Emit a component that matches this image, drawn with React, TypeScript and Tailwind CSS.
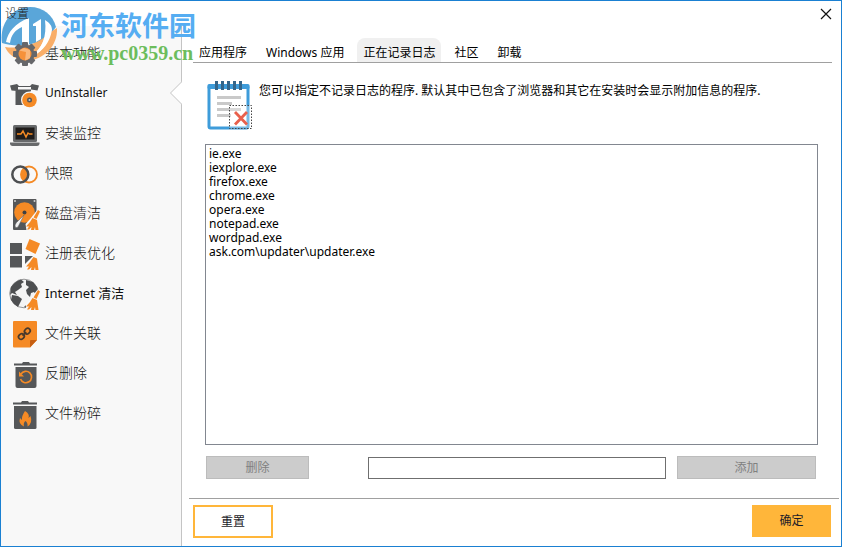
import React from 'react'

const Broom = () => (
  <g>
    <path d="M28.5 16.5L31.5 18.5L29 25.5L31 37.5L17.5 37.5L16.5 31L22 25Z" fill="#f8f8f8" />
    <path d="M29 17L31 18.5L27.5 26L24.5 24.5Z" fill="#f58a25" />
    <path d="M23.5 25L28 27L29.5 37H26.5L26 34L25 37H22L22.5 34L20 36.5H18L20 33.5L17 33.5L21 29Z" fill="#f58a25" />
  </g>
)

const GearIcon = () => (
  <svg className="relative z-20 h-10 w-8 shrink-0" viewBox="0 0 32 40" aria-hidden="true">
    <g fill="#66676a">
      <circle cx="16" cy="21" r="9.5" />
      <rect x="13" y="9" width="6" height="24" rx="1" />
      <rect x="13" y="9" width="6" height="24" rx="1" transform="rotate(45 16 21)" />
      <rect x="13" y="9" width="6" height="24" rx="1" transform="rotate(90 16 21)" />
      <rect x="13" y="9" width="6" height="24" rx="1" transform="rotate(135 16 21)" />
    </g>
    <circle cx="16" cy="21" r="6.5" fill="#f6913a" />
    <path d="M10 17.5L15 15L21 17V25L16 27.500L17 19Z" fill="#f9b77c" />
  </svg>
)

const UninstallerIcon = () => (
  <svg className="h-10 w-8 shrink-0" viewBox="0 0 32 40" aria-hidden="true">
    <path d="M1 12.5L8 11L10 13H21L23 11L30 12.5L28.5 17.5L22 16.5V18H8.5L2.5 17.5Z" fill="#555759" />
    <rect x="9" y="14" width="13" height="2.5" fill="#f8f8f8" />
    <rect x="6.5" y="17.5" width="15" height="14.5" fill="#555759" />
    <circle cx="20.5" cy="27" r="8.5" fill="#f8f8f8" />
    <circle cx="20.5" cy="27" r="7.3" fill="#f58a25" />
    <circle cx="20.5" cy="27" r="2.5" fill="#555759" />
    <circle cx="20.5" cy="27" r="1" fill="#c9c9c9" />
  </svg>
)

const MonitorIcon = () => (
  <svg className="h-10 w-8 shrink-0" viewBox="0 0 32 40" aria-hidden="true">
    <rect x="4" y="12" width="24" height="17" rx="1.5" fill="#67696b" />
    <rect x="6.500" y="14.500" width="19" height="12" fill="#1f1c1b" />
    <path d="M8 21H12L14 18L17 24L19 20L20.500 21H23.500" fill="none" stroke="#f58a25" strokeWidth="1.5" />
    <path d="M1 29.500H30.500V31Q30 33 28 33H3.500Q1.500 33 1 31Z" fill="#67696b" />
  </svg>
)

const SnapshotIcon = () => (
  <svg className="h-10 w-8 shrink-0" viewBox="0 0 32 40" aria-hidden="true">
    <circle cx="20" cy="21.5" r="8" fill="none" stroke="#f58a25" strokeWidth="1.8" />
    <path d="M15.7 14.5C21 17 21 26 15.7 28.500C10.500 26 10.500 17 15.700 14.500Z" fill="#f58a25" />
    <circle cx="11.300" cy="21.500" r="8" fill="none" stroke="#4d4f51" strokeWidth="2.5" />
  </svg>
)

const DiskIcon = () => (
  <svg className="h-10 w-8 shrink-0" viewBox="0 0 32 40" aria-hidden="true">
    <rect x="4" y="6" width="23.5" height="31" rx="1" fill="#555759" />
    <g fill="#d0d0d0">
      <circle cx="6" cy="8" r="1" />
      <circle cx="25.5" cy="8" r="1" />
    </g>
    <circle cx="15.5" cy="19.5" r="10.3" fill="#f58a25" />
    <circle cx="15.5" cy="19.5" r="2" fill="#3f4143" />
    <path d="M15 22L9 34Q6.5 36 6 33Q6 31 7.5 29.5Z" fill="#f1f1f1" stroke="#555759" strokeWidth="0.5" />
    <Broom />
  </svg>
)

const RegistryIcon = () => (
  <svg className="h-10 w-8 shrink-0" viewBox="0 0 32 40" aria-hidden="true">
    <g fill="#555759">
      <rect x="1" y="10" width="12" height="11" />
      <rect x="1" y="23" width="12" height="11.5" />
      <path d="M16 23H24L16 31Z" />
    </g>
    <path d="M20.5 6L31 10.5L26.5 21L16.5 16Z" fill="#f58a25" />
    <path d="M24.500 24L28 25.500L29.500 37H26.500L26 34L25 37H22L22.500 34L20 36.500H18L20 33.500H17L21 29Z" fill="#f58a25" />
  </svg>
)

const GlobeIcon = () => (
  <svg className="h-10 w-8 shrink-0" viewBox="0 0 32 40" aria-hidden="true">
    <circle cx="15" cy="20.5" r="14.3" fill="#f4f4f4" stroke="#555759" strokeWidth="0.6" />
    <g fill="#4d4f51">
      <path d="M2 14Q6 8 12 6.500L15 9L12 11L13 14L9 17L6 19L8 22L3 20L1 22Z" />
      <path d="M3 22L9 23L13 26L11 30L9 34Q4 31 2 27Z" />
      <path d="M17 7L24 9L28 14L29.5 20L27 22L25 19L22 20L21 24L18 21L17 17L20 14L17 12Z" />
      <path d="M15 34L20 29L19 35Z" />
    </g>
    <Broom />
  </svg>
)

const LinkIcon = () => (
  <svg className="h-10 w-8 shrink-0" viewBox="0 0 32 40" aria-hidden="true">
    <path d="M5 8H27Q28 8 28 9V27L21 34.5H5Q4 34.5 4 33.5V9Q4 8 5 8Z" fill="#f58a25" />
    <path d="M28 27H22Q21 27 21 28V34.5Z" fill="#c65f12" />
    <g fill="none" stroke="#4a3a2c" strokeWidth="1.7" transform="rotate(-42 15.5 21)">
      <rect x="8.5" y="18.3" width="6" height="5" rx="2.5" />
      <rect x="16.5" y="18.3" width="6" height="5" rx="2.5" />
      <path d="M13 20.8H18" />
    </g>
  </svg>
)

const UndeleteIcon = () => (
  <svg className="h-10 w-8 shrink-0" viewBox="0 0 32 40" aria-hidden="true">
    <path d="M5 12.5V10.5H13L14 9H20L21 10.5H28V12.5Z" fill="#555759" />
    <path d="M6.5 14H27.5V33Q27.5 35 25.5 35H8.5Q6.5 35 6.5 33Z" fill="#555759" />
    <path d="M12 21A5.7 5.7 0 1 1 11.5 26" fill="none" stroke="#f58a25" strokeWidth="1.6" />
    <path d="M10 18.5V23.5H15Z" fill="#f58a25" />
  </svg>
)

const ShredIcon = () => (
  <svg className="h-10 w-8 shrink-0" viewBox="0 0 32 40" aria-hidden="true">
    <path d="M4 11.5V9.5H12L13 8H19L20 9.5H28V11.5Z" fill="#555759" />
    <path d="M5 13H27.5V34.5Q27.5 36 26 36H6.5Q5 36 5 34.5Z" fill="#555759" />
    <path d="M16 18Q21 21 19.5 25L21.5 23Q24 30 18.5 33.5Q19 30 16.5 28Q14 30 15 33.5Q9 31 11 25L13 27Q12.5 23 16 18Z" fill="#f58a25" />
  </svg>
)

const NotepadIcon = () => (
  <svg className="h-[52px] w-12 shrink-0" viewBox="0 0 48 52" aria-hidden="true">
    <rect x="2" y="6" width="39" height="42" rx="1.5" fill="#fff" stroke="#3e9cda" strokeWidth="3" />
    <rect x="0.500" y="4" width="42" height="5" rx="1.500" fill="#3e9cda" />
    <path d="M9.5 1V10M15.5 1V10M21.5 1V10M27.5 1V10M33.5 1V10" stroke="#33658a" strokeWidth="3" />
    <path d="M10 17.500H34M10 23.500H25M10 29.500H34M10 35.500H24" stroke="#c9c9c9" strokeWidth="3" />
    <rect x="22.500" y="25.500" width="22" height="23" fill="#fff" fillOpacity="0.3" stroke="#444" strokeDasharray="1.5 1.5" />
    <path d="M28 32L40 44.500M40 32L28 44.500" stroke="#e8604c" strokeWidth="2.8" />
  </svg>
)

const menu = [
  { label: '基本功能', Icon: GearIcon },
  { label: 'UnInstaller', Icon: UninstallerIcon, active: true },
  { label: '安装监控', Icon: MonitorIcon },
  { label: '快照', Icon: SnapshotIcon },
  { label: '磁盘清洁', Icon: DiskIcon },
  { label: '注册表优化', Icon: RegistryIcon },
  { label: 'Internet 清洁', Icon: GlobeIcon, latin: true },
  { label: '文件关联', Icon: LinkIcon },
  { label: '反删除', Icon: UndeleteIcon },
  { label: '文件粉碎', Icon: ShredIcon },
]

const tabs = ['应用程序', 'Windows 应用', '正在记录日志', '社区', '卸载']

const programs = [
  'ie.exe',
  'iexplore.exe',
  'firefox.exe',
  'chrome.exe',
  'opera.exe',
  'notepad.exe',
  'wordpad.exe',
  'ask.com\\updater\\updater.exe',
]

const Watermark = () => (
  <div className="pointer-events-none absolute left-0 top-1 z-10 flex items-start gap-1">
    <svg className="h-[60px] w-14" viewBox="0 0 56 60" aria-hidden="true">
      <path d="M1 38C-2 18 12 2 29 2C42 2 52 10 55 22C47 33 40 37 30 39C20 41 10 41 1 38Z" fill="#5aa6d9" />
      <path d="M56 23C57 42 42 56 20 57C36 52 46 42 48 28Z" fill="#f9ae68" />
      <path d="M4 42C16 44 32 41 44 32C40 45 30 53 18 54C11 52 7 48 4 42Z" fill="#f9ae68" />
      <path d="M5 37C7 27 14 18 28 13V39L21 40V22C14 25 10 30 9 38Z" fill="#fff" />
      <path d="M32 19L40 14V34L35 37V21H32Z" fill="#fff" />
      <path d="M44 15C49 18 51 21 51 25C49 37 42 46 32 51C41 42 46 32 44 15Z" fill="#fff" />
    </svg>
    <div className="flex flex-col pt-1">
      <span className="text-[27px] font-bold leading-[34px] text-[#55adf2]">河东软件园</span>
      <span className="font-['Liberation_Serif',serif] text-[20px] font-bold leading-5 text-[#6cbd5c]">www.pc0359.cn</span>
    </div>
  </div>
)

const Sidebar = () => (
  <nav className="w-[181px] shrink-0 border-r border-[#c4c4c4] bg-[#f8f8f8] pt-[7px]">
    {menu.map(({ label, Icon, active, latin }) => (
      <a key={label} href="#" className="relative flex h-10 items-center gap-1 pl-2 text-sm font-light text-[#111]">
        <Icon />
        <span className={active ? 'text-xs font-normal' : latin ? 'text-[13px] font-normal' : ''}>{label}</span>
        {active && (
          <svg className="absolute -right-px top-2 h-6 w-3" viewBox="0 0 12 24" aria-hidden="true">
            <path d="M12 0.5L0.5 12L12 23.5" fill="#fff" stroke="#c4c4c4" />
          </svg>
        )}
      </a>
    ))}
  </nav>
)

const App = () => {
  return (
    <div className="relative flex h-screen flex-col border border-[#1a80d2] bg-white font-['Noto_Sans','Noto_Sans_CJK_SC',sans-serif] text-xs text-black">
      <header className="flex h-[25px] shrink-0 items-center justify-between pl-1 pr-[9px]">
        <h1 className="relative z-20 text-xs font-light text-[#222]">设置</h1>
        <button type="button" aria-label="关闭">
          <svg className="h-3 w-3" viewBox="0 0 12 12" aria-hidden="true">
            <path d="M1 1L11 11M11 1L1 11" stroke="#111" strokeWidth="1.2" />
          </svg>
        </button>
      </header>
      <Watermark />

      <div className="flex min-h-0 flex-1">
        <Sidebar />
        <main className="flex min-w-0 flex-1 flex-col">
          {/* Tabs */}
          <div role="tablist" className="ml-[11px] mr-[9px] mt-3 flex gap-[7px] border-b border-[#a0a0a0]">
            {tabs.map((tab) => (
              <button
                key={tab}
                type="button"
                role="tab"
                aria-selected={tab === '正在记录日志'}
                className="h-6 rounded-t-lg px-[6px] pt-[6px] aria-selected:bg-[#f0f0f0]"
              >
                {tab}
              </button>
            ))}
          </div>

          <div className="flex min-h-0 flex-1 flex-col px-[23px] pb-[19px] pt-[17px]">
            <div className="flex gap-1 pl-[2px]">
              <NotepadIcon />
              <p className="pt-px leading-5">
                您可以指定不记录日志的程序. 默认其中已包含了浏览器和其它在安装时会显示附加信息的程序.
              </p>
            </div>

            <select
              multiple
              aria-label="程序列表"
              className="mt-3 min-h-0 w-full flex-1 overflow-hidden border border-[#828790] bg-white px-px py-0 leading-[14px]"
            >
              {programs.map((name) => (
                <option key={name} className="h-[14px] min-h-[14px] px-[2px] py-0 leading-[14px]">{name}</option>
              ))}
            </select>

            <div className="mt-[11px] flex items-center pl-px pr-[2px]">
              <button type="button" disabled className="h-[23px] w-[103px] border border-[#bcbcbc] bg-[#ccc] text-[#808080]">
                删除
              </button>
              <input type="text" aria-label="程序名称" className="ml-[59px] mr-[11px] h-[22px] min-w-0 flex-1 border border-[#6f6f6f] bg-white px-1" />
              <button type="button" disabled className="h-[23px] w-[139px] border border-[#bcbcbc] bg-[#ccc] text-[#808080]">
                添加
              </button>
            </div>
          </div>

          {/* Footer */}
          <footer className="ml-[7px] mr-[2px] flex justify-between border-t border-[#a0a0a0] pb-2 pl-1 pr-2 pt-[6px]">
            <button type="button" className="h-[33px] w-20 border-2 border-[#ffb63a] bg-white text-[#1c1c28]">重置</button>
            <button type="button" className="h-8 w-[79px] bg-[#ffb63a] text-[#1c1c28]">确定</button>
          </footer>
        </main>
      </div>
    </div>
  )
}

export default App
